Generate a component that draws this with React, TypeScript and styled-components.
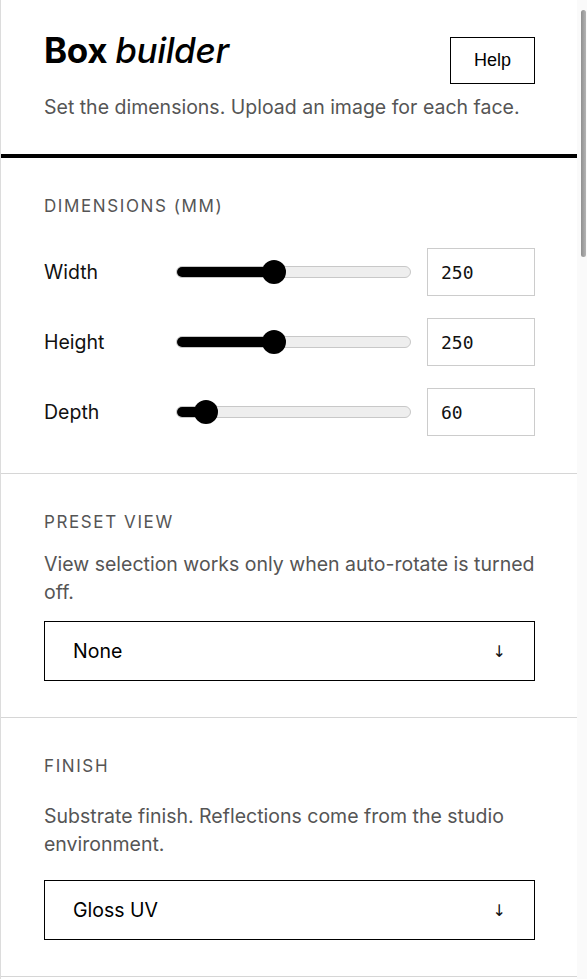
import React, { useState } from "react";
import styled, { createGlobalStyle } from "styled-components";

const GlobalStyle = createGlobalStyle`
  html, body {
    margin: 0;
    padding: 0;
    background: #fff;
    overflow: hidden;
  }
  body {
    font-family: Inter, "Noto Sans", sans-serif;
    color: #111;
  }
`;

type Dim = { key: string; label: string; value: number };

const MIN = 10;
const MAX = 600;

const Slider: React.FC<{ value: number }> = ({ value }) => {
  const pct = (value - MIN) / (MAX - MIN);
  const pos = `calc(12px + (100% - 24px) * ${pct})`;
  return (
    <SliderWrap>
      <Track>
        <Fill style={{ width: pos }} />
      </Track>
      <Thumb style={{ left: pos }} />
    </SliderWrap>
  );
};

const App: React.FC = () => {
  const [dims] = useState<Dim[]>([
    { key: "w", label: "Width", value: 250 },
    { key: "h", label: "Height", value: 250 },
    { key: "d", label: "Depth", value: 60 },
  ]);

  return (
    <>
      <GlobalStyle />
      <Page>
        <Panel>
          <Header>
            <TitleRow>
              <Title>
                Box <em>builder</em>
              </Title>
              <HelpButton>Help</HelpButton>
            </TitleRow>
            <Subtitle>Set the dimensions. Upload an image for each face.</Subtitle>
          </Header>

          <Section>
            <SectionLabel>Dimensions (mm)</SectionLabel>
            <DimGrid>
              {dims.map((d) => (
                <DimRow key={d.key}>
                  <RowLabel>{d.label}</RowLabel>
                  <Slider value={d.value} />
                  <NumberBox>{d.value}</NumberBox>
                </DimRow>
              ))}
            </DimGrid>
          </Section>

          <Section>
            <SectionLabel>Preset view</SectionLabel>
            <Help>View selection works only when auto-rotate is turned off.</Help>
            <Select>
              <span>None</span>
              <Arrow>↓</Arrow>
            </Select>
          </Section>

          <Section>
            <SectionLabel>Finish</SectionLabel>
            <Help $spaced>Substrate finish. Reflections come from the studio environment.</Help>
            <Select>
              <span>Gloss UV</span>
              <Arrow>↓</Arrow>
            </Select>
          </Section>
        </Panel>
        <ScrollRail>
          <RailThumb />
        </ScrollRail>
      </Page>
    </>
  );
};

export default App;

const Page = styled.div`
  display: flex;
  height: 100vh;
`;

const Panel = styled.aside`
  flex: 1;
  min-width: 0;
  overflow: hidden;
  box-sizing: border-box;
  border-left: 1px solid #dcdcdc;
  background: #fff;
`;

const ScrollRail = styled.div`
  width: 10px;
  flex-shrink: 0;
  background: #fafafa;
  padding: 10px 1px 0 4px;
  box-sizing: border-box;
`;

const RailThumb = styled.div`
  height: 247px;
  border-radius: 3px;
  background: linear-gradient(to right, #8f8f8f, #b4b4b4);
`;

const Header = styled.header`
  padding: 31px 42px 33px 43px;
  border-bottom: 4px solid #000;
`;

const TitleRow = styled.div`
  display: flex;
  justify-content: space-between;
  align-items: flex-start;
`;

const Title = styled.h1`
  margin: 0;
  font-size: 35px;
  line-height: 38px;
  font-weight: 700;
  letter-spacing: -0.01em;
  color: #000;
  em {
    font-weight: 500;
    font-style: italic;
  }
`;

const HelpButton = styled.button`
  margin-top: 6px;
  width: 85px;
  height: 47px;
  background: #fff;
  border: 1px solid #000;
  border-radius: 0;
  font-family: "Liberation Sans", Arial, sans-serif;
  font-size: 18px;
  color: #000;
  cursor: pointer;
`;

const Subtitle = styled.p`
  margin: 9px 0 0;
  font-size: 19.5px;
  line-height: 28px;
  color: #555;
`;

const Section = styled.section`
  padding: 36px 42px 36px 43px;
  border-bottom: 1px solid #d6d6d6;
`;

const SectionLabel = styled.div`
  font-size: 17px;
  line-height: 24px;
  letter-spacing: 1.6px;
  text-transform: uppercase;
  color: #555;
  margin-bottom: 16px;
`;

const Help = styled.p<{ $spaced?: boolean }>`
  margin: ${(p) => (p.$spaced ? "24px 0 22px" : "0 0 15px")};
  font-size: 19.5px;
  line-height: 28px;
  color: #555;
`;

const DimGrid = styled.div`
  display: grid;
  grid-gap: 22px;
  margin-top: 30px;
  margin-bottom: 1px;
`;

const DimRow = styled.div`
  display: grid;
  grid-template-columns: 116px 1fr 108px;
  grid-gap: 16px;
  align-items: center;
`;

const RowLabel = styled.div`
  font-size: 19.5px;
  color: #111;
`;

const SliderWrap = styled.div`
  position: relative;
  height: 24px;
  display: flex;
  align-items: center;
`;

const Track = styled.div`
  width: 100%;
  height: 12px;
  box-sizing: border-box;
  background: #eeeeee;
  border: 1px solid #c8c8c8;
  border-radius: 6px;
  overflow: hidden;
`;

const Fill = styled.div`
  height: 100%;
  background: #000;
`;

const Thumb = styled.div`
  position: absolute;
  top: 0;
  width: 24px;
  height: 24px;
  margin-left: -12px;
  border-radius: 50%;
  background: #000;
`;

const NumberBox = styled.div`
  height: 48px;
  box-sizing: border-box;
  border: 1px solid #cccccc;
  padding: 0 13px;
  display: flex;
  align-items: center;
  font-family: "DejaVu Sans Mono", monospace;
  font-size: 18px;
  color: #111;
`;

const Select = styled.div`
  height: 60px;
  box-sizing: border-box;
  border: 1px solid #000;
  padding: 0 28px;
  display: flex;
  justify-content: space-between;
  align-items: center;
  font-size: 19.5px;
  color: #000;
`;

const Arrow = styled.span`
  font-family: "DejaVu Sans", sans-serif;
  font-size: 16px;
  color: #111;
`;
